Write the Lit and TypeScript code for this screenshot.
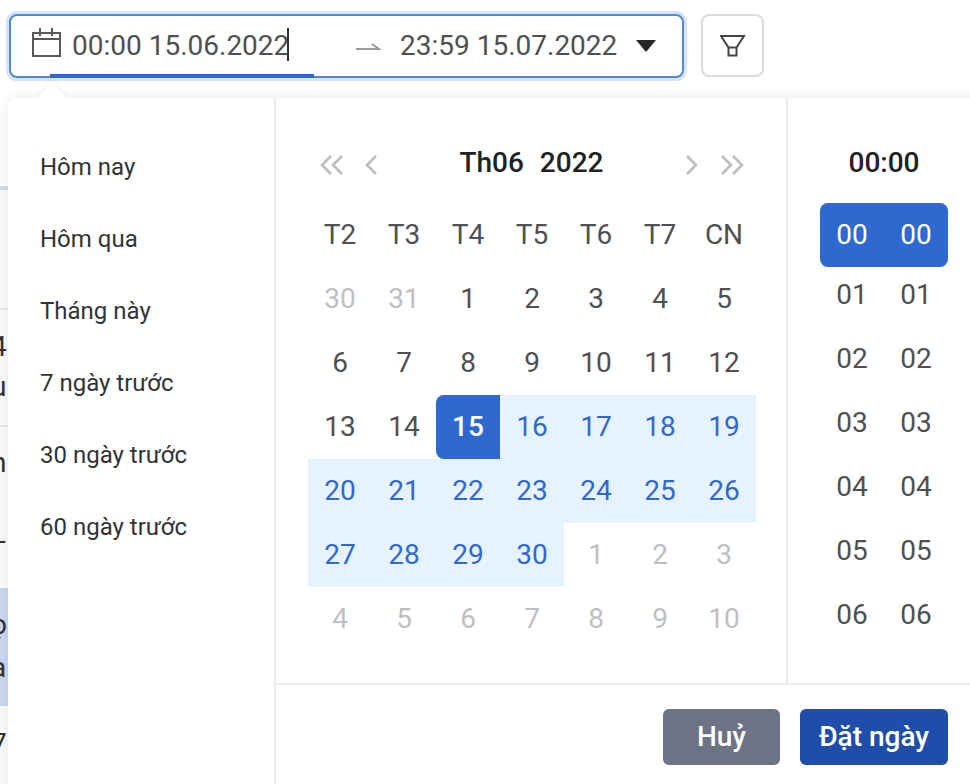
import { LitElement, html, css } from "lit";
import { customElement } from "lit/decorators.js";

const SHORTCUTS = ["Hôm nay", "Hôm qua", "Tháng này", "7 ngày trước", "30 ngày trước", "60 ngày trước"];
const HEAD = ["T2", "T3", "T4", "T5", "T6", "T7", "CN"];
type Cell = { t: number; c: string };
const cells: Cell[] = [];
[30, 31].forEach((t) => cells.push({ t, c: "off" }));
for (let t = 1; t <= 30; t++) {
  cells.push({ t, c: t === 15 ? "start" : t > 15 ? "range" : "" });
}
for (let t = 1; t <= 3; t++) cells.push({ t, c: "off" });
for (let t = 4; t <= 10; t++) cells.push({ t, c: "off" });
const HOURS = ["01", "02", "03", "04", "05", "06"];

@customElement("app-root")
export class AppRoot extends LitElement {
  static styles = css`
    :host {
      display: block;
      position: relative;
      width: 970px;
      height: 784px;
      overflow: hidden;
      background: #fff;
      font-family: Roboto, "Noto Sans", sans-serif;
      color: #505050;
    }
    .behind {
      position: absolute;
      left: 0;
      top: 186px;
      width: 8px;
      bottom: 0;
      font-size: 28px;
      color: #333;
      overflow: hidden;
      background: #fbfbfb;
    }
    .behind .row {
      position: absolute;
      left: -9px;
      width: 30px;
      height: 30px;
      line-height: 30px;
    }
    .behind .row.dash { left: -2px; }
    .behind .line {
      position: absolute;
      left: 0;
      width: 8px;
      height: 2px;
      background: #e8e8ea;
    }
    .behind .head-line {
      position: absolute;
      left: 0;
      top: 0;
      width: 8px;
      height: 4px;
      background: #d8dbea;
    }
    .behind .sel {
      position: absolute;
      left: 0;
      width: 8px;
      top: 402px;
      height: 118px;
      background: #ccd8f1;
    }
    .bar {
      display: flex;
      align-items: flex-start;
      gap: 17px;
      padding: 14px 0 0 9px;
    }
    .picker {
      position: relative;
      box-sizing: border-box;
      width: 675px;
      height: 64px;
      border: 2px solid #4f89d2;
      border-radius: 8px;
      box-shadow: 0 0 0 3px #d6e2f5;
      display: flex;
      align-items: center;
      padding-left: 20px;
      font-size: 28px;
      line-height: 36px;
    }
    .cal { width: 32px; height: 32px; margin: 0 9px 4px 0; flex: none; }
    .from { position: relative; width: 283px; flex: none; white-space: nowrap; }
    .caret {
      position: absolute;
      left: 215px;
      top: 0;
      width: 2px;
      height: 33px;
      background: #333;
    }
    .arrow { width: 26px; height: 12px; flex: none; margin-right: 19px; }
    .to { width: 236px; flex: none; white-space: nowrap; }
    .drop { width: 20px; height: 12px; flex: none; }
    .active {
      position: absolute;
      left: 39px;
      bottom: -2px;
      width: 264px;
      height: 4px;
      background: #2f69d0;
    }
    .filter {
      box-sizing: border-box;
      width: 63px;
      height: 63px;
      border: 2px solid #dcdcdc;
      border-radius: 8px;
      display: flex;
      align-items: center;
      justify-content: center;
      background: #fff;
    }
    .filter svg { width: 26px; height: 26px; }
    .pop {
      position: absolute;
      left: 8px;
      top: 98px;
      width: 990px;
      height: 720px;
      background: #fff;
      border-radius: 8px;
      box-shadow: 0 0 14px rgba(0, 0, 0, 0.09);
      display: flex;
    }
    .tip {
      position: absolute;
      left: 33px;
      top: -10px;
      width: 22px;
      height: 22px;
      background: #fff;
      transform: rotate(45deg);
      box-shadow: -2px -2px 5px rgba(0, 0, 0, 0.04);
    }
    .side {
      position: relative;
      box-sizing: border-box;
      width: 268px;
      flex: none;
      border-right: 2px solid #ececec;
      padding: 33px 0 0 32px;
      font-size: 24px;
      color: #333;
    }
    .side div { height: 72px; line-height: 72px; }
    .main { flex: 1; display: flex; flex-direction: column; min-width: 0; }
    .top { display: flex; height: 585px; border-bottom: 2px solid #ececec; }
    .calendar {
      box-sizing: border-box;
      width: 512px;
      flex: none;
      border-right: 2px solid #ececec;
      padding: 0 0 0 32px;
    }
    .head {
      width: 448px;
      height: 105px;
      display: flex;
      align-items: center;
      justify-content: space-between;
      padding-top: 24px;
      box-sizing: border-box;
      font-size: 28px;
      font-weight: 500;
      color: #222;
      white-space: pre;
      word-spacing: 1px;
    }
    .nav { display: flex; align-items: center; padding: 0 11px; margin-top: 4px; }
    .nav.left { gap: 18px; }
    .nav.right { gap: 19px; }
    .nav svg { display: block; width: 26px; height: 24px; }
    .nav .one { width: 16px; }
    .grid {
      display: grid;
      grid-template-columns: repeat(7, 64px);
      grid-auto-rows: 64px;
      font-size: 28px;
      text-align: center;
      line-height: 64px;
    }
    .off { color: #bfbfbf; }
    .range { background: #e6f3fe; color: #2f69d0; }
    .start { background: #2f69d0; color: #fff; font-weight: 500; border-radius: 8px 0 0 8px; }
    .time { flex: 1; padding-left: 32px; }
    .tlabel {
      width: 128px;
      height: 105px;
      padding-top: 24px;
      box-sizing: border-box;
      line-height: 81px;
      text-align: center;
      font-size: 28px;
      font-weight: 500;
      color: #222;
    }
    .trow {
      width: 128px;
      height: 64px;
      display: grid;
      grid-template-columns: 64px 64px;
      text-align: center;
      font-size: 28px;
      line-height: 64px;
    }
    .trow.sel {
      background: #2f69d0;
      color: #fff;
      border-radius: 8px;
      margin-bottom: -4px;
    }
    .foot {
      display: flex;
      gap: 20px;
      padding: 24px 0 0 387px;
    }
    .btn {
      height: 56px;
      border-radius: 6px;
      color: #fff;
      font-size: 28px;
      line-height: 56px;
      text-align: center;
      box-sizing: border-box;
      font-weight: 500;
    }
    .cancel { width: 117px; background: #6b7385; }
    .ok { width: 148px; background: #1f4eaa; }
  `;

  render() {
    return html`
      <div class="behind">
        <div class="head-line"></div>
        <div class="line" style="top:122px"></div>
        <div class="row" style="top:146px">4</div>
        <div class="row" style="top:186px">u</div>
        <div class="line" style="top:239px"></div>
        <div class="row" style="top:262px">n</div>
        <div class="row dash" style="top:340px">-</div>
        <div class="sel"></div>
        <div class="row" style="top:424px">ọ</div>
        <div class="row" style="top:467px">à</div>
        <div class="row" style="top:543px">7</div>
      </div>

      <div class="bar">
        <div class="picker">
          <svg class="cal" viewBox="0 0 32 32" fill="none" stroke="#595959" stroke-width="2">
            <rect x="2" y="5" width="27" height="23"></rect>
            <path d="M2 11h27M9 0v8M21 0v8"></path>
          </svg>
          <div class="from">00:00 15.06.2022<span class="caret"></span></div>
          <svg class="arrow" viewBox="0 0 26 12" fill="none" stroke="#9a9a9a" stroke-width="2">
            <path d="M1 9h23L17 4"></path>
          </svg>
          <div class="to">23:59 15.07.2022</div>
          <svg class="drop" viewBox="0 0 20 12"><path d="M0 0h20L10 12z" fill="#262626"></path></svg>
          <div class="active"></div>
        </div>
        <div class="filter">
          <svg viewBox="0 0 26 26" fill="none" stroke="#444" stroke-width="2">
            <path d="M1 3h23l-7.500 11.500H8.500z"></path>
            <path d="M8.500 14.500V22.500H16.500V14.500"></path>
          </svg>
        </div>
      </div>

      <div class="pop">
        <div class="tip"></div>
        <div class="side">${SHORTCUTS.map((s) => html`<div>${s}</div>`)}</div>
        <div class="main">
          <div class="top">
            <div class="calendar">
              <div class="head">
                <div class="nav left">
                  <svg viewBox="0 0 26 24" fill="none" stroke="#bdbdbd" stroke-width="2.6">
                    <path d="M12 3 3 12l9 9M23 3l-9 9 9 9"></path>
                  </svg>
                  <svg class="one" viewBox="0 0 16 24" fill="none" stroke="#bdbdbd" stroke-width="2.6">
                    <path d="M13 3l-9 9 9 9"></path>
                  </svg>
                </div>
                <div>Th06  2022</div>
                <div class="nav right">
                  <svg class="one" viewBox="0 0 16 24" fill="none" stroke="#bdbdbd" stroke-width="2.6">
                    <path d="M3 3l9 9-9 9"></path>
                  </svg>
                  <svg viewBox="0 0 26 24" fill="none" stroke="#bdbdbd" stroke-width="2.6">
                    <path d="M3 3l9 9-9 9M14 3l9 9-9 9"></path>
                  </svg>
                </div>
              </div>
              <div class="grid">
                ${HEAD.map((h) => html`<div>${h}</div>`)}
                ${cells.map((c) => html`<div class=${c.c}>${c.t}</div>`)}
              </div>
            </div>
            <div class="time">
              <div class="tlabel">00:00</div>
              <div class="trow sel"><span>00</span><span>00</span></div>
              ${HOURS.map((h) => html`<div class="trow"><span>${h}</span><span>${h}</span></div>`)}
            </div>
          </div>
          <div class="foot">
            <div class="btn cancel">Huỷ</div>
            <div class="btn ok">Đặt ngày</div>
          </div>
        </div>
      </div>
    `;
  }
}
